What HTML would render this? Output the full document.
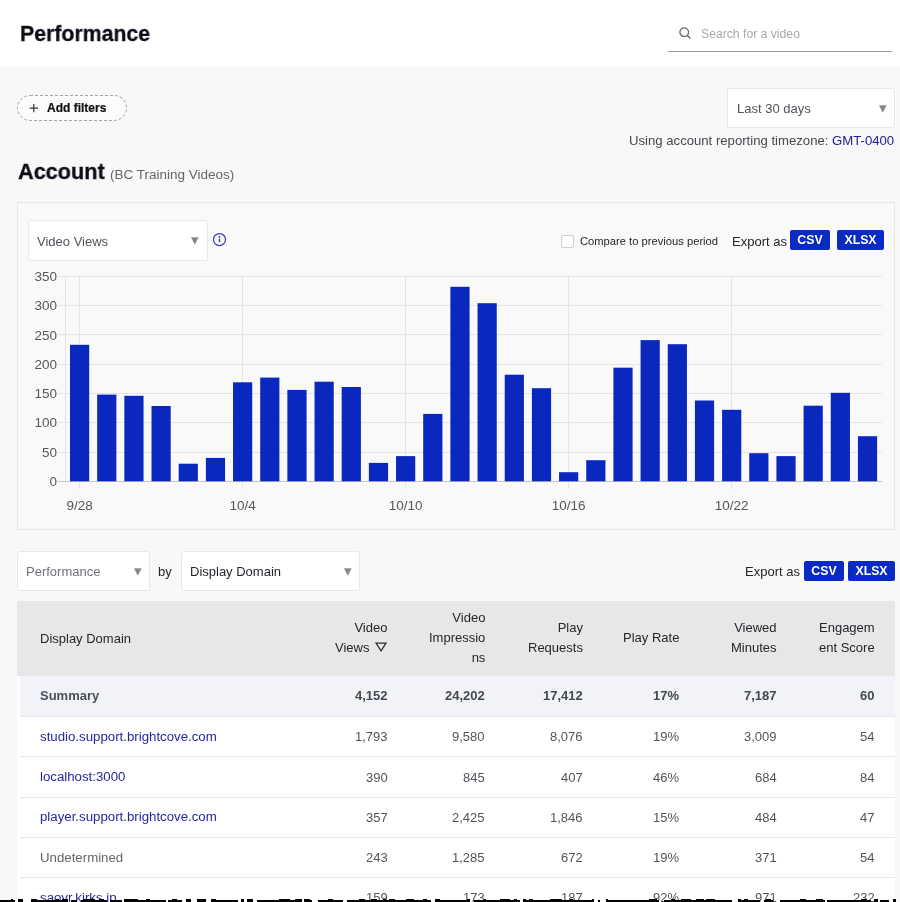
<!DOCTYPE html>
<html><head><meta charset="utf-8"><style>
html,body{margin:0;padding:0;}
body{width:900px;height:902px;position:relative;overflow:hidden;background:#f8f8f8;font-family:"Liberation Sans",sans-serif;}
.t{position:absolute;white-space:nowrap;will-change:transform;}
.dd{position:absolute;background:#fff;border:1px solid #e8e8e8;border-radius:2.5px;}
.tri{position:absolute;width:8px;height:8px;}
.btn{position:absolute;background:#0a2ac4;border-radius:2px;color:#fff;font-weight:bold;font-size:12.3px;text-align:center;line-height:20px;will-change:transform;}
</style></head><body>
<div style="position:absolute;left:0;top:0;width:900px;height:67px;background:#fff"></div>
<div class="t" style="left:20px;top:23.35px;font-size:22.5px;line-height:22.5px;color:#0d0d18;font-weight:bold;transform:scaleX(0.946);transform-origin:0 0;-webkit-text-stroke:0.3px #0d0d18;">Performance</div>
<svg style="position:absolute;left:677px;top:25px" width="16" height="16" viewBox="0 0 16 16"><circle cx="7.2" cy="7.2" r="4.3" fill="none" stroke="#666" stroke-width="1.3"/><line x1="10.4" y1="10.4" x2="13" y2="13" stroke="#666" stroke-width="1.4" stroke-linecap="round"/></svg>
<div class="t" style="left:701px;top:27.97px;font-size:12.2px;line-height:12.2px;color:#a8a8a8;">Search for a video</div>
<div style="position:absolute;left:668px;top:51px;width:224px;height:1px;background:#9a9a9a"></div>
<svg style="position:absolute;left:0;top:80px" width="150" height="50" viewBox="0 80 150 50"><rect x="17.5" y="95.5" width="109" height="25" rx="12.5" fill="#fbfbfb" stroke="#a4a4a4" stroke-width="1" stroke-dasharray="3 2"/><path d="M29.6,108.1 H38 M33.8,103.9 V112.3" stroke="#333" stroke-width="1.2"/></svg>
<div class="t" style="left:47px;top:102.34px;font-size:12px;line-height:12px;color:#111;font-weight:bold;-webkit-text-stroke:0.2px #111;">Add filters</div>
<div class="dd" style="left:727px;top:88px;width:166px;height:38px"></div>
<div class="t" style="left:737px;top:102.00px;font-size:13px;line-height:13px;color:#52545b;">Last 30 days</div>
<svg class="tri" style="left:879px;top:105px" viewBox="0 0 8 8"><path d="M0.3,0.4 L7.3,0.4 L3.8,7.3 Z" fill="#858585" stroke="#858585" stroke-width="0.4" stroke-linejoin="round"/></svg>
<div class="t" style="right:6px;top:133.87px;font-size:13.15px;line-height:13.15px;color:#46484f;text-align:right;">Using account reporting timezone: <span style="color:#1c1c94">GMT-0400</span></div>
<div class="t" style="left:18px;top:160.88px;font-size:22px;line-height:22px;color:#0d0d18;font-weight:bold;transform:scaleX(0.985);transform-origin:0 0;-webkit-text-stroke:0.3px #0d0d18;">Account</div>
<div class="t" style="left:110px;top:167.77px;font-size:13.5px;line-height:13.5px;color:#64666c;">(BC Training Videos)</div>
<div style="position:absolute;left:17px;top:202px;width:876px;height:326px;border:1px solid #e6e6e6;background:#f9f9f9"></div>
<div class="dd" style="left:28px;top:220px;width:178px;height:39px"></div>
<div class="t" style="left:37px;top:234.50px;font-size:13px;line-height:13px;color:#52545b;">Video Views</div>
<svg class="tri" style="left:191.3px;top:237px" viewBox="0 0 8 8"><path d="M0.3,0.4 L7.3,0.4 L3.8,7.3 Z" fill="#858585" stroke="#858585" stroke-width="0.4" stroke-linejoin="round"/></svg>
<svg style="position:absolute;left:212px;top:232px" width="15" height="15" viewBox="0 0 15 15"><circle cx="7.5" cy="7.5" r="6" fill="none" stroke="#4444ac" stroke-width="1.25"/><rect x="6.75" y="6.7" width="1.5" height="3.3" fill="#4444ac"/><circle cx="7.5" cy="5.0" r="0.9" fill="#4444ac"/></svg>
<div style="position:absolute;left:561px;top:235px;width:11px;height:11px;border:1px solid #cfcfcf;border-radius:2px;background:#fff"></div>
<div class="t" style="left:580px;top:236.02px;font-size:11.2px;line-height:11.2px;color:#24262c;">Compare to previous period</div>
<div class="t" style="left:732px;top:234.50px;font-size:13px;line-height:13px;color:#24262c;">Export as</div>
<div class="btn" style="left:790px;top:230px;width:40px;height:20px">CSV</div>
<div class="btn" style="left:837px;top:230px;width:47px;height:20px">XLSX</div>
<svg width="900" height="540" viewBox="0 0 900 540" style="position:absolute;left:0;top:0">
<g stroke="#e5e5e5" stroke-width="1" shape-rendering="crispEdges">
<line x1="58" x2="882" y1="276.30" y2="276.30"/>
<line x1="58" x2="882" y1="305.59" y2="305.59"/>
<line x1="58" x2="882" y1="334.88" y2="334.88"/>
<line x1="58" x2="882" y1="364.17" y2="364.17"/>
<line x1="58" x2="882" y1="393.46" y2="393.46"/>
<line x1="58" x2="882" y1="422.75" y2="422.75"/>
<line x1="58" x2="882" y1="452.04" y2="452.04"/>
<line x1="65.5" x2="65.5" y1="276" y2="481"/>
<line x1="79.60" x2="79.60" y1="276" y2="489"/>
<line x1="242.62" x2="242.62" y1="276" y2="489"/>
<line x1="405.64" x2="405.64" y1="276" y2="489"/>
<line x1="568.66" x2="568.66" y1="276" y2="489"/>
<line x1="731.68" x2="731.68" y1="276" y2="489"/>
</g>
<line x1="58" x2="882" y1="481.5" y2="481.5" stroke="#c6c6c6" stroke-width="1" shape-rendering="crispEdges"/>
<g fill="#0a28bd">
<rect x="70.00" y="344.8" width="19.2" height="136.5"/>
<rect x="97.17" y="394.6" width="19.2" height="86.7"/>
<rect x="124.34" y="395.8" width="19.2" height="85.5"/>
<rect x="151.51" y="406.0" width="19.2" height="75.3"/>
<rect x="178.68" y="463.7" width="19.2" height="17.6"/>
<rect x="205.85" y="457.9" width="19.2" height="23.4"/>
<rect x="233.02" y="382.3" width="19.2" height="99.0"/>
<rect x="260.19" y="377.6" width="19.2" height="103.7"/>
<rect x="287.36" y="389.9" width="19.2" height="91.4"/>
<rect x="314.53" y="381.7" width="19.2" height="99.6"/>
<rect x="341.70" y="387.0" width="19.2" height="94.3"/>
<rect x="368.87" y="462.9" width="19.2" height="18.4"/>
<rect x="396.04" y="456.1" width="19.2" height="25.2"/>
<rect x="423.21" y="413.9" width="19.2" height="67.4"/>
<rect x="450.38" y="286.8" width="19.2" height="194.5"/>
<rect x="477.55" y="303.2" width="19.2" height="178.1"/>
<rect x="504.72" y="374.7" width="19.2" height="106.6"/>
<rect x="531.89" y="388.2" width="19.2" height="93.1"/>
<rect x="559.06" y="472.2" width="19.2" height="9.1"/>
<rect x="586.23" y="460.2" width="19.2" height="21.1"/>
<rect x="613.40" y="367.7" width="19.2" height="113.6"/>
<rect x="640.57" y="340.1" width="19.2" height="141.2"/>
<rect x="667.74" y="344.2" width="19.2" height="137.1"/>
<rect x="694.91" y="400.5" width="19.2" height="80.8"/>
<rect x="722.08" y="409.8" width="19.2" height="71.5"/>
<rect x="749.25" y="453.2" width="19.2" height="28.1"/>
<rect x="776.42" y="456.1" width="19.2" height="25.2"/>
<rect x="803.59" y="405.7" width="19.2" height="75.6"/>
<rect x="830.76" y="392.8" width="19.2" height="88.5"/>
<rect x="857.93" y="436.2" width="19.2" height="45.1"/>
</g>
<g font-family="Liberation Sans, sans-serif" font-size="13.5" fill="#55575d">
<text x="57" y="280.9" text-anchor="end">350</text>
<text x="57" y="310.2" text-anchor="end">300</text>
<text x="57" y="339.5" text-anchor="end">250</text>
<text x="57" y="368.8" text-anchor="end">200</text>
<text x="57" y="398.1" text-anchor="end">150</text>
<text x="57" y="427.4" text-anchor="end">100</text>
<text x="57" y="456.6" text-anchor="end">50</text>
<text x="57" y="485.9" text-anchor="end">0</text>
<text x="79.6" y="510" text-anchor="middle">9/28</text>
<text x="242.6" y="510" text-anchor="middle">10/4</text>
<text x="405.6" y="510" text-anchor="middle">10/10</text>
<text x="568.7" y="510" text-anchor="middle">10/16</text>
<text x="731.7" y="510" text-anchor="middle">10/22</text>
</g>
</svg>
<div class="dd" style="left:17px;top:551px;width:131px;height:38px"></div>
<div class="t" style="left:26px;top:565.40px;font-size:13px;line-height:13px;color:#6f7278;">Performance</div>
<svg class="tri" style="left:133.6px;top:568px" viewBox="0 0 8 8"><path d="M0.3,0.4 L7.3,0.4 L3.8,7.3 Z" fill="#858585" stroke="#858585" stroke-width="0.4" stroke-linejoin="round"/></svg>
<div class="t" style="left:158px;top:565.00px;font-size:13px;line-height:13px;color:#24262c;">by</div>
<div class="dd" style="left:181px;top:551px;width:177px;height:38px"></div>
<div class="t" style="left:190px;top:565.40px;font-size:13px;line-height:13px;color:#24262c;">Display Domain</div>
<svg class="tri" style="left:343.6px;top:568px" viewBox="0 0 8 8"><path d="M0.3,0.4 L7.3,0.4 L3.8,7.3 Z" fill="#858585" stroke="#858585" stroke-width="0.4" stroke-linejoin="round"/></svg>
<div class="t" style="left:745px;top:564.50px;font-size:13px;line-height:13px;color:#24262c;">Export as</div>
<div class="btn" style="left:804px;top:561px;width:40px;height:20px">CSV</div>
<div class="btn" style="left:848px;top:561px;width:47px;height:20px">XLSX</div>
<div style="position:absolute;left:17px;top:601px;width:878px;height:301px;background:#fff"></div>
<div style="position:absolute;left:17px;top:601px;width:878px;height:75px;background:#e6e7e6"></div>
<div class="t" style="left:40px;top:631.50px;font-size:13px;line-height:13px;color:#24262c;">Display Domain</div>
<div class="t" style="right:512.5px;top:617.80px;font-size:13px;line-height:20px;color:#24262c;text-align:right;">Video<br>Views<svg width="12" height="10" viewBox="0 0 12 10" style="margin-left:6px;vertical-align:-0.3px"><path d="M1,1.2 H11 L6,8.8 Z" fill="none" stroke="#2a2c32" stroke-width="1.2" stroke-linejoin="miter"/></svg></div>
<div class="t" style="right:415px;top:607.50px;font-size:13px;line-height:20px;color:#24262c;text-align:right;">Video<br>Impressio<br>ns</div>
<div class="t" style="right:317.5px;top:617.80px;font-size:13px;line-height:20px;color:#24262c;text-align:right;">Play<br>Requests</div>
<div class="t" style="right:220.5px;top:631.30px;font-size:13px;line-height:13px;color:#24262c;text-align:right;">Play Rate</div>
<div class="t" style="right:123px;top:617.80px;font-size:13px;line-height:20px;color:#24262c;text-align:right;">Viewed<br>Minutes</div>
<div class="t" style="right:25.5px;top:617.80px;font-size:13px;line-height:20px;color:#24262c;text-align:right;">Engagem<br>ent Score</div>
<div style="position:absolute;left:20px;top:676px;width:875px;height:40px;background:#f2f3f8"></div>
<div class="t" style="left:40px;top:689.00px;font-size:13px;line-height:13px;color:#4c4f57;font-weight:bold;">Summary</div>
<div class="t" style="right:512.5px;top:689.00px;font-size:13px;line-height:13px;color:#46484f;text-align:right;font-weight:bold;">4,152</div>
<div class="t" style="right:415px;top:689.00px;font-size:13px;line-height:13px;color:#46484f;text-align:right;font-weight:bold;">24,202</div>
<div class="t" style="right:317.5px;top:689.00px;font-size:13px;line-height:13px;color:#46484f;text-align:right;font-weight:bold;">17,412</div>
<div class="t" style="right:220.5px;top:689.00px;font-size:13px;line-height:13px;color:#46484f;text-align:right;font-weight:bold;">17%</div>
<div class="t" style="right:123px;top:689.00px;font-size:13px;line-height:13px;color:#46484f;text-align:right;font-weight:bold;">7,187</div>
<div class="t" style="right:25.5px;top:689.00px;font-size:13px;line-height:13px;color:#46484f;text-align:right;font-weight:bold;">60</div>
<div class="t" style="left:40px;top:730.08px;font-size:13.25px;line-height:13.25px;color:#2626a0;">studio.support.brightcove.com</div>
<div class="t" style="right:512.5px;top:730.30px;font-size:13px;line-height:13px;color:#52545b;text-align:right;">1,793</div>
<div class="t" style="right:415px;top:730.30px;font-size:13px;line-height:13px;color:#52545b;text-align:right;">9,580</div>
<div class="t" style="right:317.5px;top:730.30px;font-size:13px;line-height:13px;color:#52545b;text-align:right;">8,076</div>
<div class="t" style="right:220.5px;top:730.30px;font-size:13px;line-height:13px;color:#52545b;text-align:right;">19%</div>
<div class="t" style="right:123px;top:730.30px;font-size:13px;line-height:13px;color:#52545b;text-align:right;">3,009</div>
<div class="t" style="right:25.5px;top:730.30px;font-size:13px;line-height:13px;color:#52545b;text-align:right;">54</div>
<div class="t" style="left:40px;top:770.28px;font-size:13.25px;line-height:13.25px;color:#2626a0;">localhost:3000</div>
<div class="t" style="right:512.5px;top:770.50px;font-size:13px;line-height:13px;color:#52545b;text-align:right;">390</div>
<div class="t" style="right:415px;top:770.50px;font-size:13px;line-height:13px;color:#52545b;text-align:right;">845</div>
<div class="t" style="right:317.5px;top:770.50px;font-size:13px;line-height:13px;color:#52545b;text-align:right;">407</div>
<div class="t" style="right:220.5px;top:770.50px;font-size:13px;line-height:13px;color:#52545b;text-align:right;">46%</div>
<div class="t" style="right:123px;top:770.50px;font-size:13px;line-height:13px;color:#52545b;text-align:right;">684</div>
<div class="t" style="right:25.5px;top:770.50px;font-size:13px;line-height:13px;color:#52545b;text-align:right;">84</div>
<div class="t" style="left:40px;top:810.48px;font-size:13.25px;line-height:13.25px;color:#2626a0;">player.support.brightcove.com</div>
<div class="t" style="right:512.5px;top:810.70px;font-size:13px;line-height:13px;color:#52545b;text-align:right;">357</div>
<div class="t" style="right:415px;top:810.70px;font-size:13px;line-height:13px;color:#52545b;text-align:right;">2,425</div>
<div class="t" style="right:317.5px;top:810.70px;font-size:13px;line-height:13px;color:#52545b;text-align:right;">1,846</div>
<div class="t" style="right:220.5px;top:810.70px;font-size:13px;line-height:13px;color:#52545b;text-align:right;">15%</div>
<div class="t" style="right:123px;top:810.70px;font-size:13px;line-height:13px;color:#52545b;text-align:right;">484</div>
<div class="t" style="right:25.5px;top:810.70px;font-size:13px;line-height:13px;color:#52545b;text-align:right;">47</div>
<div class="t" style="left:40px;top:850.68px;font-size:13.25px;line-height:13.25px;color:#64666c;">Undetermined</div>
<div class="t" style="right:512.5px;top:850.90px;font-size:13px;line-height:13px;color:#52545b;text-align:right;">243</div>
<div class="t" style="right:415px;top:850.90px;font-size:13px;line-height:13px;color:#52545b;text-align:right;">1,285</div>
<div class="t" style="right:317.5px;top:850.90px;font-size:13px;line-height:13px;color:#52545b;text-align:right;">672</div>
<div class="t" style="right:220.5px;top:850.90px;font-size:13px;line-height:13px;color:#52545b;text-align:right;">19%</div>
<div class="t" style="right:123px;top:850.90px;font-size:13px;line-height:13px;color:#52545b;text-align:right;">371</div>
<div class="t" style="right:25.5px;top:850.90px;font-size:13px;line-height:13px;color:#52545b;text-align:right;">54</div>
<div class="t" style="left:40px;top:890.88px;font-size:13.25px;line-height:13.25px;color:#2626a0;">saoyr.kirks.jp</div>
<div class="t" style="right:512.5px;top:891.10px;font-size:13px;line-height:13px;color:#52545b;text-align:right;">159</div>
<div class="t" style="right:415px;top:891.10px;font-size:13px;line-height:13px;color:#52545b;text-align:right;">173</div>
<div class="t" style="right:317.5px;top:891.10px;font-size:13px;line-height:13px;color:#52545b;text-align:right;">187</div>
<div class="t" style="right:220.5px;top:891.10px;font-size:13px;line-height:13px;color:#52545b;text-align:right;">92%</div>
<div class="t" style="right:123px;top:891.10px;font-size:13px;line-height:13px;color:#52545b;text-align:right;">971</div>
<div class="t" style="right:25.5px;top:891.10px;font-size:13px;line-height:13px;color:#52545b;text-align:right;">232</div>
<div style="position:absolute;left:20px;top:716px;width:875px;height:1px;background:#e6e6e6"></div>
<div style="position:absolute;left:20px;top:756px;width:875px;height:1px;background:#e6e6e6"></div>
<div style="position:absolute;left:20px;top:797px;width:875px;height:1px;background:#e6e6e6"></div>
<div style="position:absolute;left:20px;top:837px;width:875px;height:1px;background:#e6e6e6"></div>
<div style="position:absolute;left:20px;top:877px;width:875px;height:1px;background:#e6e6e6"></div>
<svg style="position:absolute;left:0;top:890px" width="900" height="12" viewBox="0 890 900 12" shape-rendering="crispEdges"><g fill="#000"><rect x="0" y="900" width="4" height="2"/><rect x="4" y="900" width="5" height="2"/><rect x="9" y="900" width="2" height="2"/><rect x="11" y="899" width="2" height="3"/><rect x="13" y="900" width="2" height="2"/><rect x="18" y="899" width="5" height="3"/><rect x="31" y="899" width="6" height="3"/><rect x="37" y="900" width="3" height="2"/><rect x="40" y="900" width="6" height="2"/><rect x="46" y="900" width="6" height="2"/><rect x="52" y="900" width="2" height="2"/><rect x="54" y="900" width="2" height="2"/><rect x="56" y="899" width="3" height="3"/><rect x="59" y="900" width="3" height="2"/><rect x="62" y="899" width="6" height="3"/><rect x="71" y="900" width="6" height="2"/><rect x="81" y="900" width="2" height="2"/><rect x="83" y="899" width="6" height="3"/><rect x="89" y="899" width="6" height="3"/><rect x="95" y="900" width="4" height="2"/><rect x="99" y="899" width="5" height="3"/><rect x="104" y="900" width="3" height="2"/><rect x="110" y="900" width="4" height="2"/><rect x="114" y="900" width="4" height="2"/><rect x="118" y="900" width="4" height="2"/><rect x="124" y="899" width="5" height="3"/><rect x="129" y="899" width="4" height="3"/><rect x="133" y="899" width="5" height="3"/><rect x="138" y="900" width="2" height="2"/><rect x="140" y="900" width="6" height="2"/><rect x="146" y="899" width="4" height="3"/><rect x="150" y="900" width="4" height="2"/><rect x="154" y="900" width="6" height="2"/><rect x="160" y="900" width="2" height="2"/><rect x="162" y="900" width="4" height="2"/><rect x="168" y="900" width="4" height="2"/><rect x="172" y="899" width="5" height="3"/><rect x="177" y="900" width="5" height="2"/><rect x="186" y="899" width="5" height="3"/><rect x="197" y="899" width="2" height="3"/><rect x="199" y="899" width="4" height="3"/><rect x="203" y="899" width="3" height="3"/><rect x="211" y="899" width="5" height="3"/><rect x="216" y="900" width="4" height="2"/><rect x="220" y="900" width="5" height="2"/><rect x="225" y="900" width="4" height="2"/><rect x="229" y="900" width="4" height="2"/><rect x="233" y="900" width="5" height="2"/><rect x="241" y="899" width="3" height="3"/><rect x="247" y="899" width="6" height="3"/><rect x="257" y="900" width="5" height="2"/><rect x="262" y="900" width="6" height="2"/><rect x="268" y="900" width="3" height="2"/><rect x="271" y="900" width="6" height="2"/><rect x="277" y="900" width="2" height="2"/><rect x="279" y="899" width="6" height="3"/><rect x="285" y="899" width="5" height="3"/><rect x="290" y="900" width="5" height="2"/><rect x="295" y="899" width="2" height="3"/><rect x="297" y="899" width="3" height="3"/><rect x="300" y="899" width="2" height="3"/><rect x="304" y="899" width="6" height="3"/><rect x="310" y="900" width="2" height="2"/><rect x="318" y="900" width="3" height="2"/><rect x="321" y="900" width="3" height="2"/><rect x="324" y="900" width="4" height="2"/><rect x="328" y="899" width="5" height="3"/><rect x="333" y="900" width="5" height="2"/><rect x="338" y="900" width="5" height="2"/><rect x="347" y="900" width="2" height="2"/><rect x="349" y="900" width="4" height="2"/><rect x="353" y="900" width="3" height="2"/><rect x="356" y="900" width="3" height="2"/><rect x="359" y="899" width="6" height="3"/><rect x="365" y="900" width="6" height="2"/><rect x="371" y="899" width="6" height="3"/><rect x="377" y="900" width="2" height="2"/><rect x="379" y="900" width="4" height="2"/><rect x="383" y="899" width="3" height="3"/><rect x="386" y="900" width="3" height="2"/><rect x="389" y="899" width="6" height="3"/><rect x="395" y="900" width="3" height="2"/><rect x="398" y="900" width="3" height="2"/><rect x="401" y="900" width="5" height="2"/><rect x="406" y="899" width="3" height="3"/><rect x="409" y="899" width="5" height="3"/><rect x="414" y="900" width="2" height="2"/><rect x="416" y="900" width="4" height="2"/><rect x="420" y="900" width="3" height="2"/><rect x="423" y="899" width="4" height="3"/><rect x="427" y="900" width="4" height="2"/><rect x="435" y="899" width="2" height="3"/><rect x="437" y="899" width="3" height="3"/><rect x="440" y="900" width="5" height="2"/><rect x="445" y="900" width="6" height="2"/><rect x="451" y="900" width="5" height="2"/><rect x="456" y="900" width="4" height="2"/><rect x="460" y="900" width="2" height="2"/><rect x="462" y="900" width="2" height="2"/><rect x="464" y="900" width="3" height="2"/><rect x="467" y="899" width="3" height="3"/><rect x="474" y="900" width="5" height="2"/><rect x="479" y="900" width="2" height="2"/><rect x="481" y="900" width="3" height="2"/><rect x="484" y="899" width="2" height="3"/><rect x="486" y="900" width="5" height="2"/><rect x="491" y="900" width="3" height="2"/><rect x="494" y="900" width="6" height="2"/><rect x="500" y="899" width="4" height="3"/><rect x="504" y="899" width="6" height="3"/><rect x="510" y="900" width="2" height="2"/><rect x="512" y="900" width="2" height="2"/><rect x="514" y="899" width="3" height="3"/><rect x="517" y="900" width="3" height="2"/><rect x="523" y="899" width="3" height="3"/><rect x="526" y="900" width="3" height="2"/><rect x="529" y="899" width="4" height="3"/><rect x="533" y="900" width="5" height="2"/><rect x="538" y="900" width="2" height="2"/><rect x="540" y="900" width="4" height="2"/><rect x="544" y="900" width="6" height="2"/><rect x="550" y="899" width="6" height="3"/><rect x="556" y="899" width="6" height="3"/><rect x="562" y="900" width="3" height="2"/><rect x="565" y="900" width="2" height="2"/><rect x="567" y="900" width="3" height="2"/><rect x="570" y="899" width="3" height="3"/><rect x="573" y="900" width="5" height="2"/><rect x="578" y="900" width="2" height="2"/><rect x="580" y="900" width="4" height="2"/><rect x="584" y="900" width="6" height="2"/><rect x="590" y="900" width="2" height="2"/><rect x="592" y="899" width="2" height="3"/><rect x="598" y="900" width="2" height="2"/><rect x="606" y="899" width="2" height="3"/><rect x="608" y="900" width="6" height="2"/><rect x="614" y="900" width="6" height="2"/><rect x="620" y="900" width="4" height="2"/><rect x="624" y="900" width="6" height="2"/><rect x="630" y="900" width="6" height="2"/><rect x="636" y="900" width="6" height="2"/><rect x="642" y="900" width="4" height="2"/><rect x="646" y="900" width="3" height="2"/><rect x="649" y="899" width="3" height="3"/><rect x="652" y="899" width="5" height="3"/><rect x="657" y="900" width="2" height="2"/><rect x="664" y="900" width="4" height="2"/><rect x="668" y="900" width="3" height="2"/><rect x="671" y="899" width="4" height="3"/><rect x="675" y="900" width="3" height="2"/><rect x="678" y="900" width="3" height="2"/><rect x="681" y="899" width="2" height="3"/><rect x="683" y="899" width="5" height="3"/><rect x="688" y="899" width="3" height="3"/><rect x="691" y="900" width="5" height="2"/><rect x="696" y="899" width="5" height="3"/><rect x="701" y="899" width="3" height="3"/><rect x="704" y="900" width="2" height="2"/><rect x="706" y="899" width="2" height="3"/><rect x="708" y="899" width="5" height="3"/><rect x="713" y="899" width="2" height="3"/><rect x="715" y="900" width="6" height="2"/><rect x="721" y="900" width="6" height="2"/><rect x="727" y="900" width="2" height="2"/><rect x="729" y="900" width="3" height="2"/><rect x="738" y="899" width="3" height="3"/><rect x="741" y="900" width="3" height="2"/><rect x="744" y="899" width="4" height="3"/><rect x="748" y="900" width="6" height="2"/><rect x="754" y="900" width="6" height="2"/><rect x="764" y="900" width="2" height="2"/><rect x="766" y="899" width="3" height="3"/><rect x="769" y="899" width="2" height="3"/><rect x="771" y="900" width="2" height="2"/><rect x="780" y="900" width="2" height="2"/><rect x="782" y="900" width="4" height="2"/><rect x="786" y="900" width="5" height="2"/><rect x="791" y="900" width="4" height="2"/><rect x="795" y="900" width="2" height="2"/><rect x="797" y="900" width="3" height="2"/><rect x="800" y="899" width="3" height="3"/><rect x="803" y="899" width="3" height="3"/><rect x="806" y="900" width="4" height="2"/><rect x="810" y="900" width="6" height="2"/><rect x="816" y="899" width="4" height="3"/><rect x="820" y="899" width="3" height="3"/><rect x="823" y="900" width="2" height="2"/><rect x="827" y="900" width="6" height="2"/><rect x="833" y="900" width="3" height="2"/><rect x="836" y="900" width="3" height="2"/><rect x="839" y="900" width="2" height="2"/><rect x="841" y="900" width="5" height="2"/><rect x="846" y="900" width="6" height="2"/><rect x="852" y="900" width="5" height="2"/><rect x="857" y="900" width="4" height="2"/><rect x="861" y="899" width="3" height="3"/><rect x="864" y="899" width="3" height="3"/><rect x="867" y="900" width="4" height="2"/><rect x="874" y="899" width="4" height="3"/><rect x="880" y="900" width="5" height="2"/><rect x="885" y="900" width="4" height="2"/><rect x="893" y="899" width="3" height="3"/></g></svg>
</body></html>
